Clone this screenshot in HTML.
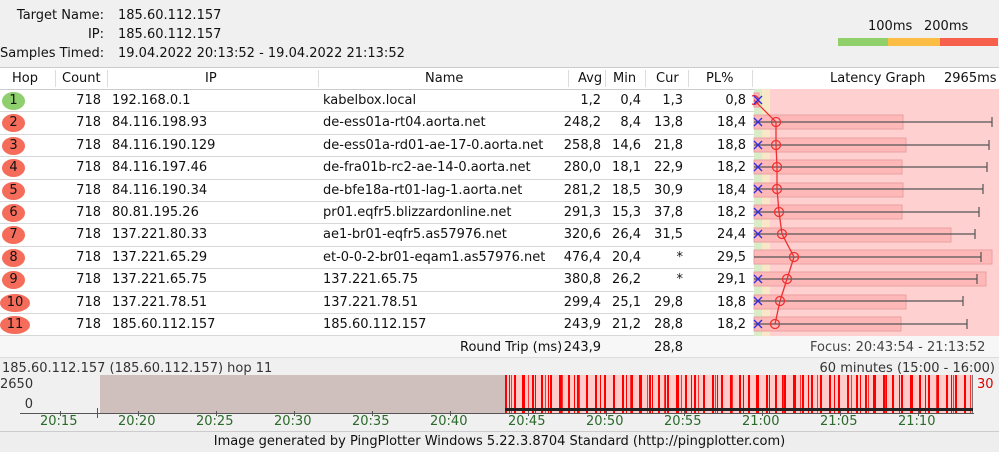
<!DOCTYPE html>
<html><head><meta charset="utf-8">
<style>
*{margin:0;padding:0;box-sizing:border-box}
body{width:999px;height:452px;background:#f0f0f0;font-family:"DejaVu Sans","Liberation Sans",sans-serif;font-size:13px;color:#111;position:relative;overflow:hidden}
.a{position:absolute;white-space:nowrap}
.r{text-align:right}
#tbl{position:absolute;left:0;top:67px;width:999px;background:#fff;border-top:1px solid #ccc}
.row{position:relative;height:22.4px;border-bottom:1px solid #d8d8d8}
.row div{position:absolute;top:3px;white-space:nowrap}
.hdr{height:22px;background:#fff;border-bottom:1px solid #ccc}
.hdr .s{position:absolute;top:2px;bottom:2px;width:1px;background:#ddd}
.c1{left:0;width:42px;text-align:center}
.c2{left:55px;width:46px;text-align:right}
.c3{left:112px}
.c4{left:323px}
.c5{left:560px;width:41px;text-align:right}
.c6{left:605px;width:36px;text-align:right}
.c7{left:645px;width:38px;text-align:right}
.c8{left:688px;width:58px;text-align:right}
.dot{position:absolute;left:2px;top:2px!important;width:23px;height:18px;border-radius:50%;background:#f56c5a;text-align:center;line-height:18px}
.tk{position:absolute;top:-3px;width:1px;height:5px;background:#555}
</style></head><body>
<div class="a r" style="left:0;width:104px;top:8px">Target Name:</div>
<div class="a" style="left:118px;top:8px">185.60.112.157</div>
<div class="a r" style="left:0;width:104px;top:27px">IP:</div>
<div class="a" style="left:118px;top:27px">185.60.112.157</div>
<div class="a r" style="left:0;width:104px;top:46px">Samples Timed:</div>
<div class="a" style="left:118px;top:46px">19.04.2022 20:13:52 - 19.04.2022 21:13:52</div>
<div class="a" style="left:868px;top:19px">100ms</div>
<div class="a" style="left:924px;top:19px">200ms</div>
<div class="a" style="left:838px;top:38px;width:50px;height:8px;background:#8fd06a"></div>
<div class="a" style="left:888px;top:38px;width:52px;height:8px;background:#fbbd44"></div>
<div class="a" style="left:940px;top:38px;width:58px;height:8px;background:#f7604a"></div>

<div id="tbl">
<div class="row hdr">
<div class="c1" style="left:4px">Hop</div><div class="s" style="left:55px"></div>
<div style="left:62px">Count</div><div class="s" style="left:107px"></div>
<div style="left:205px">IP</div><div class="s" style="left:318px"></div>
<div style="left:425px">Name</div><div class="s" style="left:568px"></div>
<div style="left:578px">Avg</div><div class="s" style="left:605px"></div>
<div style="left:613px">Min</div><div class="s" style="left:645px"></div>
<div style="left:656px">Cur</div><div class="s" style="left:688px"></div>
<div style="left:706px">PL%</div><div class="s" style="left:752px"></div>
<div style="left:830px">Latency Graph</div>
<div style="left:944px">2965ms</div>
</div>
<div class="row"><div class="dot" style="background:#8fcf6e">1</div><div class="c2">718</div><div class="c3">192.168.0.1</div><div class="c4">kabelbox.local</div><div class="c5">1,2</div><div class="c6">0,4</div><div class="c7">1,3</div><div class="c8">0,8</div></div>
<div class="row"><div class="dot">2</div><div class="c2">718</div><div class="c3">84.116.198.93</div><div class="c4">de-ess01a-rt04.aorta.net</div><div class="c5">248,2</div><div class="c6">8,4</div><div class="c7">13,8</div><div class="c8">18,4</div></div>
<div class="row"><div class="dot">3</div><div class="c2">718</div><div class="c3">84.116.190.129</div><div class="c4">de-ess01a-rd01-ae-17-0.aorta.net</div><div class="c5">258,8</div><div class="c6">14,6</div><div class="c7">21,8</div><div class="c8">18,8</div></div>
<div class="row"><div class="dot">4</div><div class="c2">718</div><div class="c3">84.116.197.46</div><div class="c4">de-fra01b-rc2-ae-14-0.aorta.net</div><div class="c5">280,0</div><div class="c6">18,1</div><div class="c7">22,9</div><div class="c8">18,2</div></div>
<div class="row"><div class="dot">5</div><div class="c2">718</div><div class="c3">84.116.190.34</div><div class="c4">de-bfe18a-rt01-lag-1.aorta.net</div><div class="c5">281,2</div><div class="c6">18,5</div><div class="c7">30,9</div><div class="c8">18,4</div></div>
<div class="row"><div class="dot">6</div><div class="c2">718</div><div class="c3">80.81.195.26</div><div class="c4">pr01.eqfr5.blizzardonline.net</div><div class="c5">291,3</div><div class="c6">15,3</div><div class="c7">37,8</div><div class="c8">18,2</div></div>
<div class="row"><div class="dot">7</div><div class="c2">718</div><div class="c3">137.221.80.33</div><div class="c4">ae1-br01-eqfr5.as57976.net</div><div class="c5">320,6</div><div class="c6">26,4</div><div class="c7">31,5</div><div class="c8">24,4</div></div>
<div class="row"><div class="dot">8</div><div class="c2">718</div><div class="c3">137.221.65.29</div><div class="c4">et-0-0-2-br01-eqam1.as57976.net</div><div class="c5">476,4</div><div class="c6">20,4</div><div class="c7">*</div><div class="c8">29,5</div></div>
<div class="row"><div class="dot">9</div><div class="c2">718</div><div class="c3">137.221.65.75</div><div class="c4">137.221.65.75</div><div class="c5">380,8</div><div class="c6">26,2</div><div class="c7">*</div><div class="c8">29,1</div></div>
<div class="row"><div class="dot" style="width:30px;left:0">10</div><div class="c2">718</div><div class="c3">137.221.78.51</div><div class="c4">137.221.78.51</div><div class="c5">299,4</div><div class="c6">25,1</div><div class="c7">29,8</div><div class="c8">18,8</div></div>
<div class="row"><div class="dot" style="width:30px;left:0">11</div><div class="c2">718</div><div class="c3">185.60.112.157</div><div class="c4">185.60.112.157</div><div class="c5">243,9</div><div class="c6">21,2</div><div class="c7">28,8</div><div class="c8">18,2</div></div>
</div>

<svg class="a" style="left:752px;top:89px" width="247" height="247" viewBox="0 0 247 247">
<rect x="2" y="0" width="245" height="247" fill="#ffd0d0"/>
<rect x="2" y="0" width="8" height="247" fill="#d8ecc8"/>
<rect x="10" y="0" width="8" height="247" fill="#f9e8c8"/>
<g fill="#ffb8b8" stroke="#e8a0a0">
<rect x="2" y="4" width="5" height="14"/>
<rect x="2" y="26" width="149" height="14"/>
<rect x="2" y="49" width="152" height="14"/>
<rect x="2" y="71" width="148" height="14"/>
<rect x="2" y="94" width="149" height="14"/>
<rect x="2" y="116" width="148" height="14"/>
<rect x="2" y="139" width="197" height="14"/>
<rect x="2" y="161" width="238" height="14"/>
<rect x="2" y="183" width="232" height="14"/>
<rect x="2" y="206" width="152" height="14"/>
<rect x="2" y="228" width="147" height="14"/>
</g>
<g stroke="#555" stroke-width="1.2">
<path d="M2 33H240M240 28v10M2 56H237M237 51v10M2 78H235M235 73v10M2 100H231M231 95v10M2 123H227M227 118v10M2 145H223M223 140v10M2 168H229M229 163v10M2 190H225M225 185v10M2 212H211M211 207v10M2 235H215M215 230v10"/>
</g>
<polyline fill="none" stroke="#f03030" stroke-width="1.3" points="2,11 24,33 24,56 25,78 25,100 27,123 30,145 42,168 35,190 28,212 23,235"/>
<g fill="none" stroke="#f03030" stroke-width="1.3">
<circle cx="2" cy="11" r="4.5"/><circle cx="24" cy="33" r="4.5"/><circle cx="24" cy="56" r="4.5"/><circle cx="25" cy="78" r="4.5"/><circle cx="25" cy="100" r="4.5"/><circle cx="27" cy="123" r="4.5"/><circle cx="30" cy="145" r="4.5"/><circle cx="42" cy="168" r="4.5"/><circle cx="35" cy="190" r="4.5"/><circle cx="28" cy="212" r="4.5"/><circle cx="23" cy="235" r="4.5"/>
</g>
<g stroke="#3030e0" stroke-width="1.4">
<path d="M2 7l8 8M10 7l-8 8M2 29l8 8M10 29l-8 8M2 52l8 8M10 52l-8 8M2 74l8 8M10 74l-8 8M2 96l8 8M10 96l-8 8M2 119l8 8M10 119l-8 8M2 141l8 8M10 141l-8 8M2 186l8 8M10 186l-8 8M2 208l8 8M10 208l-8 8M2 231l8 8M10 231l-8 8"/>
</g>
</svg>

<div class="a" style="left:0;top:336px;width:999px;height:22px;background:#f7f7f7;border-bottom:1px solid #ddd"></div>
<div class="a" style="left:460px;top:340px">Round Trip (ms)</div>
<div class="a r" style="left:560px;width:41px;top:340px">243,9</div>
<div class="a r" style="left:645px;width:38px;top:340px">28,8</div>
<div class="a" style="left:810px;top:340px;color:#444">Focus: 20:43:54 - 21:13:52</div>

<div class="a" style="left:2px;top:361px;color:#333">185.60.112.157 (185.60.112.157) hop 11</div>
<div class="a r" style="left:700px;width:295px;top:361px;color:#333">60 minutes (15:00 - 16:00)</div>
<div class="a r" style="left:0;width:33px;top:377px;color:#333">2650</div>
<div class="a r" style="left:0;width:33px;top:397px;color:#333">0</div>
<div class="a" style="left:977px;top:377px;color:#d00">30</div>
<div class="a" style="left:20px;top:374px;width:954px;height:40px;border-bottom:1px solid #555"></div>
<div class="a" style="left:100px;top:375px;width:405px;height:38px;background:#cfc0bd"></div>
<div class="a" style="left:505px;top:375px;width:468px;height:38px;background:#ffcccc;
background-image:repeating-linear-gradient(90deg,#f00 0 2px,transparent 2px 9px),repeating-linear-gradient(90deg,transparent 0 4px,#f00 4px 5px,transparent 5px 13px),repeating-linear-gradient(90deg,transparent 0 6px,#f33 6px 7px,transparent 7px 17px);border-right:1px solid #777"></div>
<div class="a" style="left:505px;top:408px;width:468px;height:3px;background:#222"></div>
<div class="a" style="left:97px;top:408px;width:1px;height:10px;background:#555"></div>
<div class="a" style="left:0;top:414px;width:999px;font-size:13px;color:#2a6a2a">
<i class="tk" style="left:60px"></i><i class="tk" style="left:138px"></i><i class="tk" style="left:216px"></i><i class="tk" style="left:294px"></i><i class="tk" style="left:372px"></i><i class="tk" style="left:450px"></i><i class="tk" style="left:528px"></i><i class="tk" style="left:606px"></i><i class="tk" style="left:684px"></i><i class="tk" style="left:762px"></i><i class="tk" style="left:840px"></i><i class="tk" style="left:918px"></i>
<span class="a" style="left:40px">20:15</span><span class="a" style="left:118px">20:20</span><span class="a" style="left:196px">20:25</span><span class="a" style="left:274px">20:30</span><span class="a" style="left:352px">20:35</span><span class="a" style="left:430px">20:40</span><span class="a" style="left:508px">20:45</span><span class="a" style="left:586px">20:50</span><span class="a" style="left:664px">20:55</span><span class="a" style="left:742px">21:00</span><span class="a" style="left:820px">21:05</span><span class="a" style="left:898px">21:10</span>
</div>
<div class="a" style="left:0;top:431px;width:999px;height:21px;border-top:1px solid #ccc;background:#eee;text-align:center;padding-top:2px">Image generated by PingPlotter Windows 5.22.3.8704 Standard (http://pingplotter.com)</div>
</body></html>
